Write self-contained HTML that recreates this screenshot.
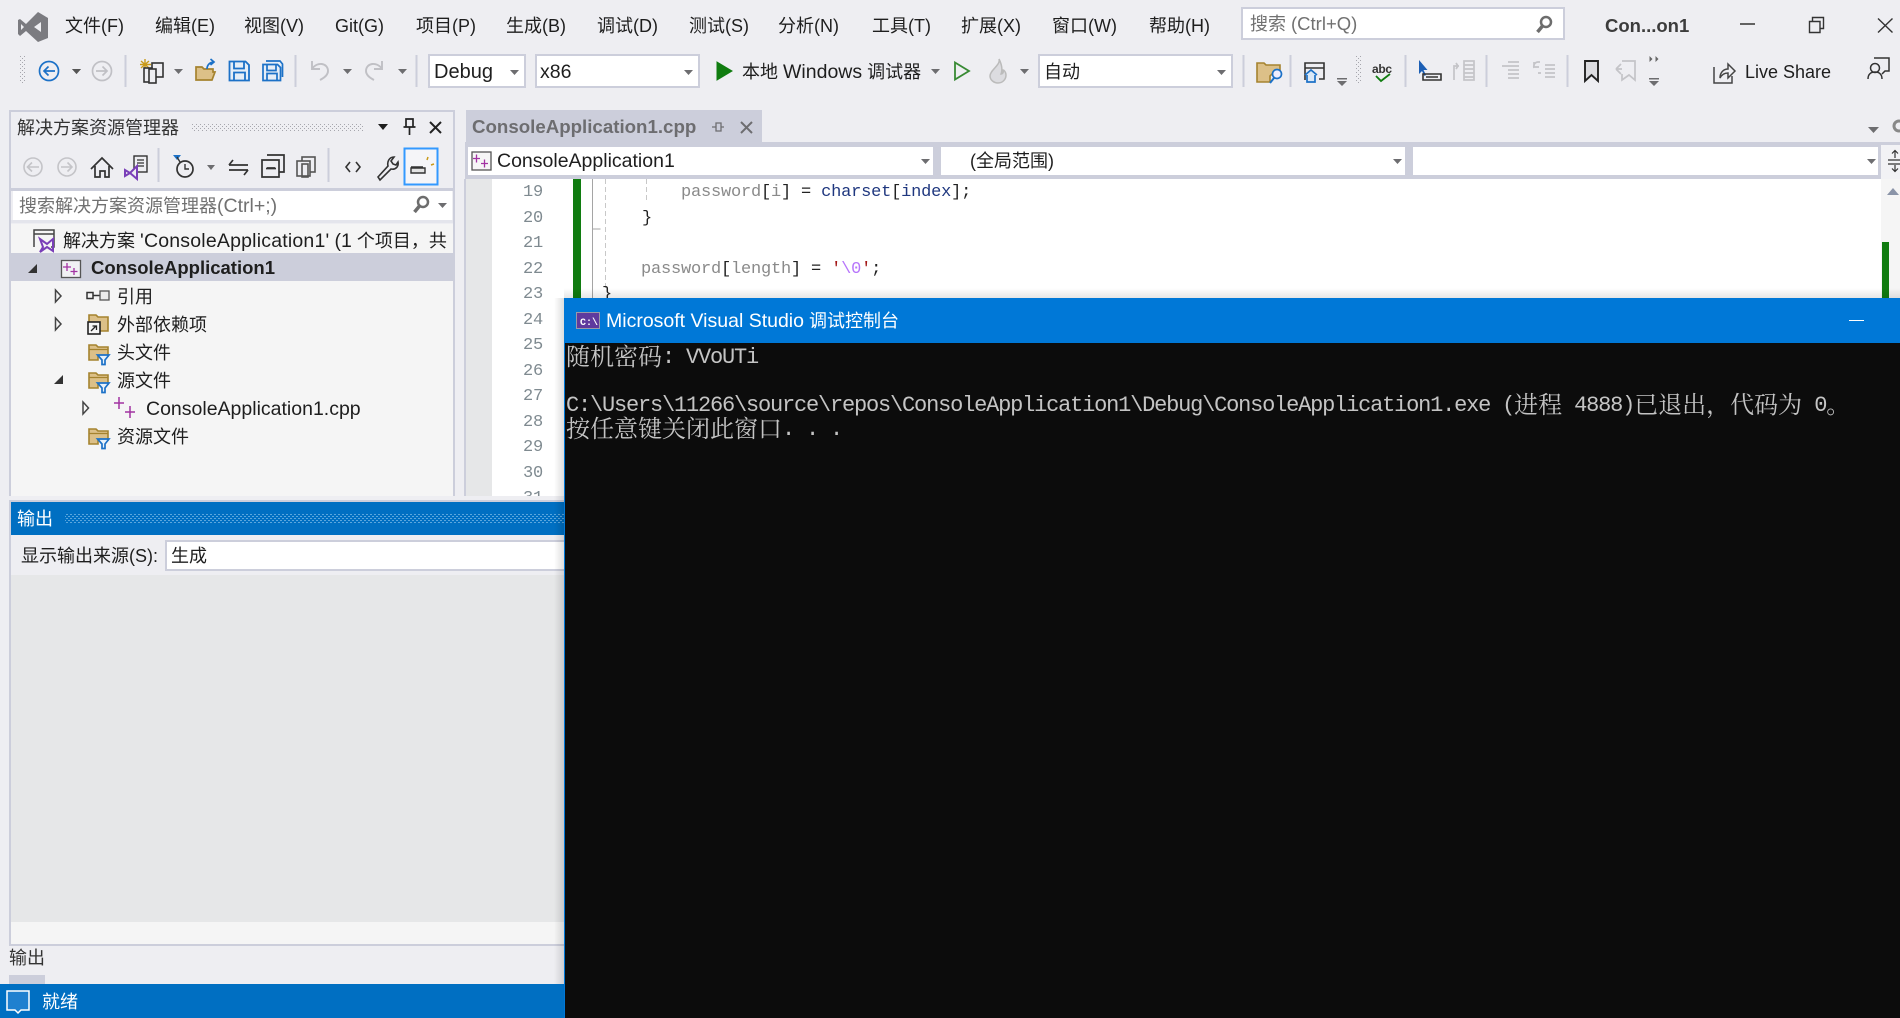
<!DOCTYPE html>
<html lang="zh-CN"><head><meta charset="utf-8"><title>Visual Studio</title>
<style>
html,body{margin:0;padding:0}
body{width:1900px;height:1018px;overflow:hidden;position:relative;background:#eeeef2;font-family:"Liberation Sans","Noto Sans CJK SC",sans-serif;font-size:18px;color:#1e1e1e}
svg.base{position:absolute;left:0;top:0}
.t{position:absolute;white-space:nowrap;line-height:24px;height:24px}
.l{font-size:19.5px}
#ln .t{font-family:"Liberation Mono",monospace;font-size:17px;letter-spacing:-.2px;color:#7f8a90;width:40px;left:503px;text-align:right}
#code .t{font-family:"Liberation Mono",monospace;font-size:17px;letter-spacing:-.2px;color:#222}
.v{color:#8a8a8a}.n{color:#1f377f}.s{color:#a31515}.e{color:#b776fb}
#con{position:absolute;left:564px;top:298px;width:1336px;height:720px;background:#0c0c0c}
#bar{position:absolute;left:0;top:0;width:1336px;height:45px;background:#0078d7}
#edge{position:absolute;left:0;top:0;width:1px;height:720px;background:#0078d7}
#con .c{position:absolute;left:2px;white-space:nowrap;height:25px;line-height:25px;color:#c4c4c4;font-family:"Liberation Mono",monospace;font-size:22px;letter-spacing:-1.2px}
#con .c b{font-weight:400;font-family:"Noto Serif CJK SC",serif;font-size:24px;letter-spacing:0;display:inline-block;height:25px;line-height:25px;vertical-align:top;position:relative;top:-3px}
</style></head><body>
<svg class="base" width="1900" height="1018" viewBox="0 0 1900 1018" xmlns="http://www.w3.org/2000/svg">
<defs>
<pattern id="g1" width="4" height="4" patternUnits="userSpaceOnUse"><rect width="1" height="1" fill="#a6a6ad"/><rect x="2" y="2" width="1" height="1" fill="#a6a6ad"/></pattern>
<pattern id="g2" width="4" height="4" patternUnits="userSpaceOnUse"><rect width="2" height="1" fill="#5aa6dd"/><rect x="2" y="2" width="2" height="1" fill="#5aa6dd"/></pattern>
<g id="ff"><path d="M1 17V2h7l2 2h10v9H10v4z" fill="#dcc088" stroke="#a5832f" stroke-width="1.6"/><path d="M1.500 6.500h18" stroke="#a5832f" stroke-width="1.200"/><path d="M9.500 12h11.500l-4 5v4.500h-3V17z" fill="#e8f2fb" stroke="#1c71c7" stroke-width="1.700"/></g>
</defs>
<!-- solution explorer frame -->
<rect x="9" y="110" width="446" height="386" fill="#cccedb"/>
<rect x="11" y="112" width="442" height="384" fill="#eeeef2"/>
<rect x="13" y="191" width="439" height="29" fill="#fff"/>
<rect x="11" y="188" width="442" height="3" fill="#cccedb"/>
<rect x="11" y="220" width="442" height="3" fill="#e4e5ec"/>
<rect x="11" y="224" width="442" height="272" fill="#f5f5f5"/>
<rect x="11" y="253" width="444" height="28" fill="#cccedb"/>
<rect x="191" y="123" width="172" height="9" fill="url(#g1)"/>
<!-- editor -->
<rect x="465" y="110" width="1435" height="386" fill="#eeeef2"/>
<rect x="466" y="110" width="296" height="33" fill="#cccedb"/>
<rect x="465" y="142" width="1435" height="37" fill="#cccedb"/>
<rect x="468" y="147" width="465" height="28" fill="#fff"/>
<rect x="941" y="147" width="464" height="28" fill="#fff"/>
<rect x="1413" y="147" width="465" height="28" fill="#fff"/>
<rect x="1881" y="145" width="19" height="34" fill="#f2f2f5"/>
<rect x="464" y="179" width="2" height="317" fill="#cccedb"/>
<rect x="466" y="179" width="26" height="317" fill="#e6e7e8"/>
<rect x="492" y="179" width="1389" height="317" fill="#fff"/>
<rect x="1881" y="179" width="19" height="317" fill="#f5f5f5"/>
<path d="M1887 195l6-7 6 7z" fill="#8a94a8"/>
<rect x="1882" y="242" width="7" height="56" fill="#107c10"/>
<rect x="573" y="179" width="8" height="119" fill="#107c10"/>
<rect x="592" y="179" width="1" height="119" fill="#a5a5a5"/>
<path d="M592.500 229h8" stroke="#a5a5a5"/>
<path d="M605.500 179v110" stroke="#c8c8c8" stroke-dasharray="5 3"/>
<path d="M646.500 179v24" stroke="#c8c8c8" stroke-dasharray="5 3"/>
<!-- tab-well extras -->
<path d="M1868 127h11l-5.500 6z" fill="#6d6d70"/>
<circle cx="1899" cy="126" r="5" fill="none" stroke="#888" stroke-width="3"/>
<!-- tab pin & close -->
<path d="M712 127h4M716 123v8h5v-8zM721 127h3" fill="none" stroke="#6d6d70" stroke-width="1.300"/>
<path d="M741 122l11 11M752 122l-11 11" stroke="#6d6d70" stroke-width="2"/>
<!-- nav combos arrows -->
<path d="M921 159h9l-4.500 5zM1393 159h9l-4.500 5zM1867 159h9l-4.500 5z" fill="#6d6d70"/>
<!-- nav project icon -->
<rect x="472" y="152" width="19" height="18" fill="#f6f6f6" stroke="#555" stroke-width="1.300"/>
<path d="M475 155v8M471.500 159h7M483 160v8M479.500 164h7" stroke="#a233a2" stroke-width="1.300" transform="translate(1.500 -.5)"/>
<!-- split button -->
<path d="M1888 164h14M1888 160h14M1895 151v7M1892 153.500l3-3 3 3M1895 165v6M1892 168.500l3 3 3-3" fill="none" stroke="#333" stroke-width="1.200"/>
<!-- output panel -->
<rect x="9" y="500" width="555" height="446" fill="#cccedb"/>
<rect x="11" y="502" width="553" height="442" fill="#eeeef2"/>
<rect x="11" y="502" width="553" height="33" fill="#006fc2"/>
<rect x="65" y="514" width="499" height="9" fill="url(#g2)"/>
<rect x="165" y="540" width="399" height="31" fill="#cccedb"/>
<rect x="167" y="542" width="397" height="27" fill="#fff"/>
<rect x="11" y="575" width="553" height="347" fill="#e6e7e8"/>
<rect x="11" y="922" width="553" height="22" fill="#f5f5f5"/>
<rect x="9" y="975" width="36" height="9" fill="#cccedb"/>
<!-- shadows -->
<linearGradient id="shl"><stop offset="0" stop-color="#000" stop-opacity="0"/><stop offset="1" stop-color="#000" stop-opacity=".13"/></linearGradient>
<linearGradient id="sht" x2="0" y2="1"><stop offset="0" stop-color="#000" stop-opacity="0"/><stop offset="1" stop-color="#000" stop-opacity=".1"/></linearGradient>
<rect x="554" y="298" width="10" height="686" fill="url(#shl)"/>
<rect x="564" y="288" width="1336" height="10" fill="url(#sht)"/>
<!-- status bar -->
<rect x="0" y="984" width="1900" height="34" fill="#006fc2"/>
<path d="M7 991h22v19H21l-3 3-3-3H7z" fill="#1f80cf" stroke="#fff" stroke-width="1.500"/>
<!-- inputs top -->
<rect x="1242" y="8" width="322" height="31" fill="#fff" stroke="#cccedb" stroke-width="2"/>
<g fill="none" stroke="#6d6d6d" stroke-width="2.500"><circle cx="1546" cy="22" r="5"/><path d="M1542.500 26l-5 6" stroke-width="3.500"/></g>
<rect x="429" y="55" width="96" height="32" fill="#fff" stroke="#cccedb" stroke-width="2"/>
<rect x="536" y="55" width="163" height="32" fill="#fff" stroke="#cccedb" stroke-width="2"/>
<rect x="1039" y="55" width="193" height="32" fill="#fff" stroke="#cccedb" stroke-width="2"/>
<path d="M510 70h9l-4.500 5zM684 70h9l-4.500 5zM1217 70h9l-4.500 5z" fill="#6d6d70"/>
<!-- VS logo -->
<path fill-rule="evenodd" fill="#7b7b80" d="M48 18L38 12 26 24 20 19 18 20V34L20 36 26 31 38 42 48 38ZM41 22V32L34 27ZM21 24L24 27 21 30Z"/>
<!-- window controls -->
<path d="M1740 24h15" stroke="#333" stroke-width="1.500"/>
<path d="M1809.500 21.500h10.500v11h-10.500zM1812.500 21v-3.500h11v11h-3.500" fill="none" stroke="#333" stroke-width="1.400"/>
<path d="M1878 18.500l14.500 14M1892.500 18.500l-14.500 14" stroke="#333" stroke-width="1.400"/>
<!-- toolbar -->
<rect x="20" y="56" width="6" height="28" fill="url(#g1)"/>
<g fill="none" stroke="#1c71c7" stroke-width="1.700"><circle cx="49" cy="71" r="9.500"/><path d="M55 71H44M48.500 66.500L44 71l4.500 4.500"/></g>
<path d="M72 69h9l-4.500 5zM174 69h9l-4.500 5zM343 69h9l-4.500 5zM398 69h9l-4.500 5zM931 69h9l-4.500 5zM1020 69h9l-4.500 5zM1337 78h10v1.500h-10zM1337 81h10l-5 5zM1649 78h10v1.500h-10zM1649 81h10l-5 5z" fill="#6d6d70"/>
<path d="M72 69h9l-4.500 5z" fill="#555"/>
<g fill="none" stroke="#c0c0c5" stroke-width="1.700"><circle cx="102" cy="71" r="9.500"/><path d="M96 71h11M102.500 66.500L107 71l-4.500 4.500"/></g>
<path d="M125.500 55v32M295.500 55v32M416.500 55v32M1243.500 55v32M1290.500 55v32M1405.500 55v32M1486.500 55v32M1567.500 55v32" stroke="#cccedb" stroke-width="2"/>
<path d="M145 59v11M140 64.500h11M141 61l8 7M149 61l-8 7" stroke="#c99a1a" stroke-width="1.400"/>
<g fill="#eeeef2" stroke="#333" stroke-width="1.600"><rect x="152" y="63" width="11" height="14"/><rect x="144" y="68" width="8" height="14"/><rect x="149" y="69" width="7" height="14"/></g>
<path d="M196 80V67h6l2 2h9v3h2l-3 8z" fill="#dcc088" stroke="#a5832f" stroke-width="1.700"/>
<path d="M207 69c0-4 3-7 7-7M210.500 59l3.500 3-3.500 3" fill="none" stroke="#1c71c7" stroke-width="1.700"/>
<g fill="#e6eef7" stroke="#1c71c7" stroke-width="1.800"><path d="M229.500 61.500h16l3.500 3.500v15.500h-19.500z"/><path d="M234 61.500v7h10v-7M234 80.500v-8h11v8" fill="none"/></g>
<g fill="#e6eef7" stroke="#1c71c7" stroke-width="1.700"><path d="M266 61h14l2.500 3v13"/><path d="M263 64.500h14.500l3 3v13H263z"/><path d="M267 64.500v6h9v-6M267 80.500v-7h10v7" fill="none"/></g>
<g fill="none" stroke="#c0c0c5" stroke-width="1.900"><path d="M312 61v8h8M312 69c5-8 16-6 16 2 0 4-4 7-8 9"/><path d="M382 61v8h-8M382 69c-5-8-16-6-16 2 0 4 4 7 8 9"/></g>
<path d="M717 62l15 9-15 9z" fill="#107c10" stroke="#107c10"/>
<path d="M955 62.500l14 8.500-14 8.500z" fill="#eeeef2" stroke="#388a34" stroke-width="1.800"/>
<path d="M999 59c2 6-9 11-9 17 0 4 4 7 8 7s8-3 8-8c0-3-2-5-3-5 1 3-1 4-2 4 2-5 0-11-2-15z" fill="#dcdce0" stroke="#bbb" stroke-width="1.500"/>
<path d="M1257 82V63h7l2 2h14v7h-6l-4 4v6z" fill="#dcc088" stroke="#a5832f" stroke-width="1.600"/>
<circle cx="1277" cy="74" r="4.500" fill="#eef" stroke="#1c71c7" stroke-width="1.700"/><path d="M1274 78l-4 5" stroke="#1c71c7" stroke-width="2"/>
<path d="M1305 80V63h19v16h-5M1305 68h19" fill="none" stroke="#333" stroke-width="1.600"/>
<path d="M1305 75l6-5 6 5M1307 75v7h8v-7" fill="#dbe9f7" stroke="#1c71c7" stroke-width="1.700"/>
<rect x="1356" y="56" width="6" height="28" fill="url(#g1)"/>
<text x="1372" y="73" font-family="Liberation Sans" font-size="12" font-weight="700" fill="#333" textLength="20">abc</text>
<path d="M1376 76l5 5 9-7" fill="none" stroke="#107c10" stroke-width="1.800"/>
<path d="M1419 60v14l3-3 2.500 5 1.500-1-2.500-5h4z" fill="#1c5fb5"/>
<path d="M1423 74h18v6h-18zM1426 77h12" fill="none" stroke="#333" stroke-width="1.600"/>
<g fill="none" stroke="#c4c4c8" stroke-width="1.700"><path d="M1454 80V66h5M1458 66l-2-3M1458 66l-2 3"/><rect x="1464" y="61" width="10" height="19"/><path d="M1464 65h10M1464 69h10M1464 73h10M1464 77h10"/>
<path d="M1502 66h6M1508 62h11M1508 66h11M1508 70h11M1508 74h11M1508 78h11"/>
<path d="M1534 68c-1-4 2-6 4-6h2M1534 62v5h5M1545 65h10M1545 69h10M1545 73h10M1545 77h10M1538 73h3"/>
<path d="M1616 69l5-5M1616 69l5 5M1616 69h6M1622 61h13v19l-6-5-7 5v-6"/></g>
<path d="M1585 61h13v20l-6.500-6-6.500 6z" fill="#dcdce0" stroke="#222" stroke-width="1.900"/>
<path d="M1649.500 56l3 3-3 3zM1655.500 56l3 3-3 3z" fill="#666"/>
<g fill="none" stroke="#444" stroke-width="1.500"><path d="M1714 67v16h18v-7"/><path d="M1720 78c0-6 4-9 8-9v-5l7 7-7 7v-5c-3 0-6 1-8 5z" fill="#eeeef2"/></g>
<g fill="none" stroke="#333" stroke-width="1.500"><path d="M1874 58h15v13h-4l-3 3"/><circle cx="1875" cy="68" r="4.500" fill="#eeeef2"/><path d="M1868 79c0-5 3-7 7-7s7 2 7 7"/></g>
<!-- SE title -->
<path d="M378 124h10l-5 6z" fill="#1e1e1e"/>
<path d="M406 119h7v8h-7zM403.500 127h12M409.500 127v8" fill="none" stroke="#222" stroke-width="1.700"/>
<path d="M430 122l11 11M441 122l-11 11" stroke="#222" stroke-width="2"/>
<!-- SE toolbar -->
<g fill="none" stroke="#c4c4c8" stroke-width="1.600"><circle cx="33" cy="167" r="9"/><path d="M39 167H28M32 162.500L27.500 167l4.500 4.500"/><circle cx="67" cy="167" r="9"/><path d="M61 167h11M67.500 162.500L72 167l-4.500 4.500"/></g>
<path d="M91 169l11-11 11 11M95 166v11h5v-6h5v6h4v-11" fill="none" stroke="#333" stroke-width="1.700"/>
<rect x="134" y="156" width="13" height="16" fill="#eeeef2" stroke="#333" stroke-width="1.400"/><path d="M137 160h7M137 163h7M137 166h7" stroke="#333" stroke-width="1.200"/>
<path d="M125 170l5 3 7-7v13l-7-6-5 3zM125 170l5 3" fill="#eeeef2" stroke="#7a3fb8" stroke-width="2"/>
<path d="M158.500 148v34M328.500 148v34" stroke="#cccedb" stroke-width="2"/>
<path d="M173 155h8l-4 5z" fill="#1c71c7"/>
<circle cx="185" cy="169" r="8" fill="#eeeef2" stroke="#333" stroke-width="1.700"/><path d="M177 157l3 5M185 164v5h4" fill="none" stroke="#333" stroke-width="1.400"/>
<path d="M207 165h8l-4 5z" fill="#6d6d70"/>
<path d="M229 165h19M233 160l-4 5M248 170h-19M244 175l4-5" fill="none" stroke="#333" stroke-width="1.700"/>
<path d="M262 160h17v17h-17zM267 155h17v17h-5M267 168h8" fill="none" stroke="#333" stroke-width="1.700"/>
<path d="M266 168.500h10" stroke="#333" stroke-width="1.700"/>
<g fill="none" stroke="#555" stroke-width="1.600"><rect x="302" y="157" width="13" height="15"/><rect x="297" y="161" width="13" height="15" fill="#eeeef2"/><rect x="302" y="164" width="6" height="13"/></g>
<path d="M350 162l-4 5 4 5M356 162l4 5-4 5" fill="none" stroke="#333" stroke-width="1.600"/>
<path d="M378 177l10-11c-1-4 1-9 6-9l-3 4 2 3 3 1 2-3c1 5-3 8-7 7l-11 11z" fill="#eeeef2" stroke="#333" stroke-width="1.600"/>
<rect x="404.500" y="148.500" width="33" height="36" fill="#f5f5f8" stroke="#3399ff" stroke-width="2"/>
<path d="M411 173h14v-5h-14zM411 167h12" fill="#e3e3e3" stroke="#333" stroke-width="1.400"/>
<path d="M427 160l1-3M431 165l3-1" stroke="#c99a1a" stroke-width="1.500"/>
<!-- SE search -->
<g fill="none" stroke="#6d6d6d" stroke-width="2.500"><circle cx="423" cy="202" r="5"/><path d="M419.500 206l-5 6" stroke-width="3.500"/></g>
<path d="M438 203h9l-4.500 5z" fill="#6d6d70"/>
<!-- Tree -->
<path d="M34 247v-17h20v17h-3M34 234h20" fill="none" stroke="#444" stroke-width="1.500"/>
<path d="M40 239l7 5 6-5v12l-6-4-7 5 3-5z" fill="none" stroke="#7a3fb8" stroke-width="2"/>
<path d="M28 273l9-9v9z" fill="#333"/>
<rect x="61.500" y="260.500" width="19" height="17" fill="#f1f1f4" stroke="#555" stroke-width="1.300"/>
<path d="M67 263v8M63 267h8M74 268v7M70.500 271.500h7" stroke="#a233a2" stroke-width="1.300"/>
<path d="M55.500 290l5.500 6-5.500 6zM55.500 318l5.500 6-5.500 6zM83 402l5.500 6-5.500 6z" fill="none" stroke="#444" stroke-width="1.500"/>
<path d="M54 384l9-9v9z" fill="#333"/>
<rect x="87" y="292.500" width="6" height="6" fill="none" stroke="#333" stroke-width="1.500"/><path d="M93 295.500h7" stroke="#333" stroke-width="1.500"/><rect x="100" y="291" width="9" height="9" fill="#ececec" stroke="#555" stroke-width="1.300"/>
<path d="M89 332v-17h7l2 2h10v14H99" fill="#dcc088" stroke="#a5832f" stroke-width="1.600"/>
<rect x="88" y="322" width="12" height="12" fill="#f5f5f5" stroke="#222" stroke-width="1.600"/><path d="M91 331l5-5M92.500 326h4v4" fill="none" stroke="#222" stroke-width="1.300"/>
<use href="#ff" x="88" y="343"/><use href="#ff" x="88" y="371"/><use href="#ff" x="88" y="427"/>
<path d="M119 397v12M114 403h10M130 406v12M125 412h10" stroke="#a233a2" stroke-width="1.500"/>
</svg>

<!-- menu -->
<div class="t" style="left:65px;top:14px">文件(F)</div>
<div class="t" style="left:155px;top:14px">编辑(E)</div>
<div class="t" style="left:244px;top:14px">视图(V)</div>
<div class="t" style="left:335px;top:14px">Git(G)</div>
<div class="t" style="left:416px;top:14px">项目(P)</div>
<div class="t" style="left:506px;top:14px">生成(B)</div>
<div class="t" style="left:597px;top:14px">调试(D)</div>
<div class="t" style="left:689px;top:14px">测试(S)</div>
<div class="t" style="left:778px;top:14px">分析(N)</div>
<div class="t" style="left:872px;top:14px">工具(T)</div>
<div class="t" style="left:961px;top:14px">扩展(X)</div>
<div class="t" style="left:1052px;top:14px">窗口(W)</div>
<div class="t" style="left:1149px;top:14px">帮助(H)</div>
<div class="t" style="left:1250px;top:12px;color:#717171">搜索 <span class="l" style="font-size:18.500px">(Ctrl+Q)</span></div>
<div class="t" style="left:1605px;top:14px;font-weight:700;color:#3c3c3c"><span style="font-size:18.500px">Con...on1</span></div>
<!-- toolbar text -->
<div class="t" style="left:434px;top:60px"><span class="l" style="font-size:20px">Debug</span></div>
<div class="t" style="left:540px;top:60px"><span class="l">x86</span></div>
<div class="t" style="left:742px;top:60px">本地 <span class="l">Windows</span> 调试器</div>
<div class="t" style="left:1044px;top:60px">自动</div>
<div class="t" style="left:1745px;top:60px"><span style="font-size:18px">Live Share</span></div>
<!-- SE text -->
<div class="t" style="left:17px;top:116px;color:#333">解决方案资源管理器</div>
<div class="t" style="left:19px;top:194px;color:#717171">搜索解决方案资源管理器<span class="l">(Ctrl+;)</span></div>
<div class="t" style="left:63px;top:229px;width:390px;overflow:hidden">解决方案 <span class="l" style="letter-spacing:.2px">'ConsoleApplication1'</span> <span class="l">(1</span> 个项目，共</div>
<div class="t" style="left:91px;top:256px;font-weight:700"><span style="font-size:18.500px">ConsoleApplication1</span></div>
<div class="t" style="left:117px;top:285px">引用</div>
<div class="t" style="left:117px;top:313px">外部依赖项</div>
<div class="t" style="left:117px;top:341px">头文件</div>
<div class="t" style="left:117px;top:369px">源文件</div>
<div class="t" style="left:146px;top:397px"><span class="l">ConsoleApplication1.cpp</span></div>
<div class="t" style="left:117px;top:425px">资源文件</div>
<!-- doc tab -->
<div class="t" style="left:472px;top:115px;font-weight:700;color:#6d6d70"><span style="font-size:18.700px">ConsoleApplication1.cpp</span></div>
<div class="t" style="left:497px;top:149px"><span class="l">ConsoleApplication1</span></div>
<div class="t" style="left:970px;top:149px">(全局范围)</div>
<!-- editor text -->
<div style="position:absolute;left:466px;top:179px;width:1415px;height:317px;overflow:hidden">
<div id="ln" style="position:absolute;left:-466px;top:-176px;width:1000px;height:600px">
<div class="t" style="top:178px">19</div><div class="t" style="top:204px">20</div><div class="t" style="top:229px">21</div><div class="t" style="top:255px">22</div><div class="t" style="top:280px">23</div><div class="t" style="top:306px">24</div><div class="t" style="top:331px">25</div><div class="t" style="top:357px">26</div><div class="t" style="top:382px">27</div><div class="t" style="top:408px">28</div><div class="t" style="top:433px">29</div><div class="t" style="top:459px">30</div><div class="t" style="top:484px">31</div>
</div>
<div id="code" style="position:absolute;left:-466px;top:-176px;width:1900px;height:600px">
<div class="t" style="left:681px;top:178px"><span class="v">password</span>[<span class="v">i</span>] = <span class="n">charset</span>[<span class="n">index</span>];</div>
<div class="t" style="left:642px;top:204px">}</div>
<div class="t" style="left:641px;top:255px"><span class="v">password</span>[<span class="v">length</span>] = <span class="s">'</span><span class="e">\0</span><span class="s">'</span>;</div>
<div class="t" style="left:602px;top:280px">}</div>
</div>
</div>
<!-- output text -->
<div class="t" style="left:17px;top:507px;height:24px;color:#fff">输出</div>
<div class="t" style="left:21px;top:544px">显示输出来源(S):</div>
<div class="t" style="left:171px;top:544px">生成</div>
<div class="t" style="left:9px;top:946px;color:#333">输出</div>
<div class="t" style="left:42px;top:990px;color:#fff">就绪</div>
<!-- console -->
<div id="con">
<div id="edge"></div>
<div id="bar">
<svg width="40" height="45" style="position:absolute;left:10px;top:0"><rect x="2.500" y="14.500" width="23" height="16" fill="#5f3a9e" stroke="#9a9aa8"/><text x="6" y="27" font-family="Liberation Mono" font-size="10" font-weight="700" fill="#fff">C:\</text></svg>
<div class="t" style="left:42px;top:11px;color:#fff"><span style="font-size:19.500px">Microsoft Visual Studio</span> 调试控制台</div>
<div style="position:absolute;left:1285px;top:22px;width:15px;height:1px;background:#fff"></div>
</div>
<div class="c" style="top:47px"><b>随机密码</b>: VVoUTi</div>
<div class="c" style="top:95px">C:\Users\11266\source\repos\ConsoleApplication1\Debug\ConsoleApplication1.exe (<b>进程</b> 4888)<b>已退出，代码为</b> 0<b>。</b></div>
<div class="c" style="top:119px"><b>按任意键关闭此窗口</b>. . .</div>
</div>
</body></html>
